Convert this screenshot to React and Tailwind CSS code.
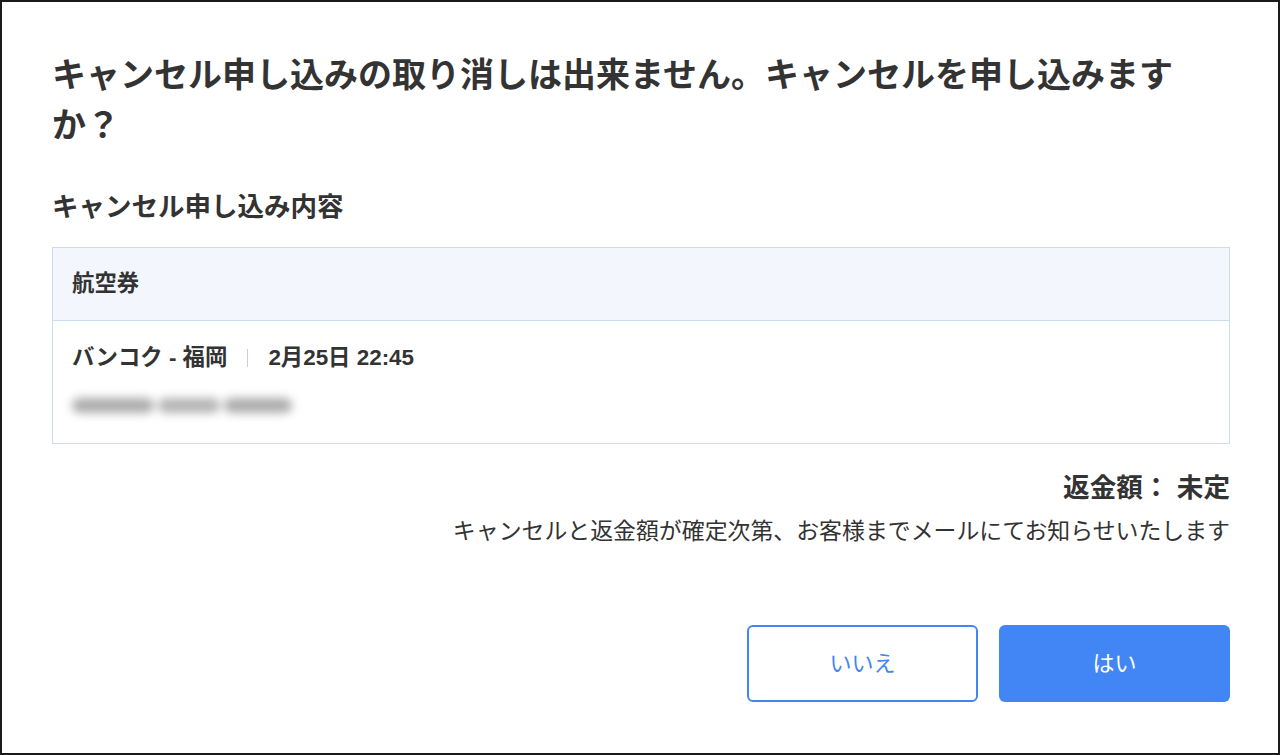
import React from 'react'

// Cancellation confirmation dialog
const font = { fontFamily: '"Liberation Sans", "Noto Sans CJK JP", sans-serif' }

function BookingTable() {
  return (
    <div className="mt-[22px] border border-[#c9dcf0]">
      <div className="h-[73px] flex items-center px-[19px] bg-[#f3f7fd] border-b border-[#c9dcf0]">
        <span className="text-[22.4px] font-semibold text-[#333]">航空券</span>
      </div>
      <div className="px-[19px] pt-[21px] pb-[28px]">
        <div className="flex items-center h-[31px] text-[22.4px] font-bold text-[#333]">
          <span>バンコク - 福岡</span>
          <span className="mx-[20px] w-px h-[18px] bg-[#c5d0dc]" />
          <span>2月25日 22:45</span>
        </div>
        {/* masked booking reference */}
        <div className="mt-[22px] h-[20px] flex items-center gap-[4px] blur-[5px]">
          <span className="h-[15px] w-[82px] rounded-full bg-[#acacac]" />
          <span className="h-[15px] w-[62px] rounded-full bg-[#b4b4b4]" />
          <span className="h-[15px] w-[68px] rounded-full bg-[#acacac]" />
        </div>
      </div>
    </div>
  )
}

export default function App() {
  return (
    <div style={font} className="w-[1280px] h-[755px] bg-white border-2 border-[#1a1a1a] overflow-hidden">
      <div className="pl-[50px] pr-[48px] pt-[48px]">
        <h1 className="text-[34px] leading-[50px] font-bold text-[#333]">
          キャンセル申し込みの取り消しは出来ません。キャンセルを申し込みますか？
        </h1>

        <h2 className="mt-[39px] text-[26.5px] leading-[36px] font-bold text-[#333]">
          キャンセル申し込み内容
        </h2>

        <BookingTable />

        <div className="mt-[26px] text-right text-[26.6px] leading-[36px] font-bold text-[#333]">
          返金額： 未定
        </div>
        <p className="mt-[9px] text-right text-[22.9px] leading-[32px] text-[#333]">
          キャンセルと返金額が確定次第、お客様までメールにてお知らせいたします
        </p>

        <div className="mt-[78px] flex justify-end gap-[21px]">
          <button className="w-[231px] h-[77px] rounded-[6px] border-2 border-[#4285f4] bg-white text-[22px] text-[#4285f4]">
            いいえ
          </button>
          <button className="w-[231px] h-[77px] rounded-[6px] bg-[#4285f4] text-[22px] text-white">
            はい
          </button>
        </div>
      </div>
    </div>
  )
}
